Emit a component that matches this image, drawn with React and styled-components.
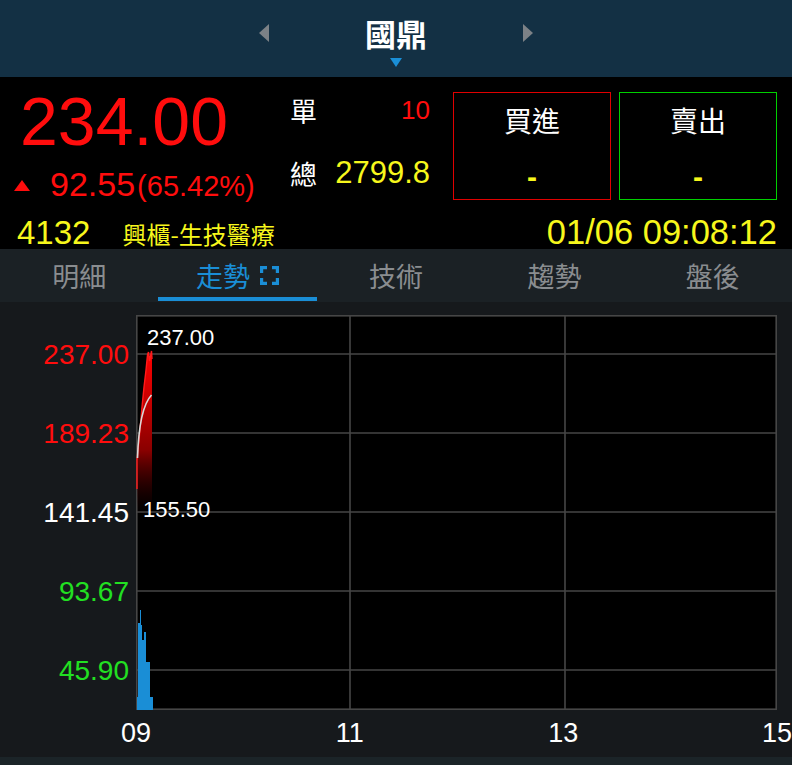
import { styled, createGlobalStyle } from "styled-components";

const GlobalStyle = createGlobalStyle`
    html, body {
        margin: 0;
        padding: 0;
        background: #000;
        overflow: hidden;
    }
    #root {
        width: 792px;
    }
`

const sans = `"Liberation Sans", Arial, "Noto Sans CJK TC", sans-serif`
const cjk = `"Noto Sans CJK TC", "Liberation Sans", sans-serif`
const red = "#ff0d0d"
const yellow = "#f7f71c"
const green = "#22e022"
const blue = "#1a8ed6"

const Header = styled.header`
    height: 77px;
    background: #133044;
    display: flex;
    flex-direction: column;
    align-items: center;
    padding-top: 14px;
    box-sizing: border-box;
`
const TitleRow = styled.div`
    display: flex;
    align-items: center;
    gap: 96px;
    height: 38px;
`
const Arrow = styled.span`
    width: 0;
    height: 0;
    border-top: 9px solid transparent;
    border-bottom: 9px solid transparent;
    ${p => p.$dir === "left" ? "border-right: 10px solid #7c8186;" : "border-left: 10px solid #7c8186;"}
`
const Title = styled.h1`
    margin: 0;
    font-family: ${cjk};
    font-weight: bold;
    font-size: 31px;
    line-height: 38px;
    color: #fff;
`
const Caret = styled.span`
    margin-top: 6px;
    width: 0;
    height: 0;
    border-left: 6px solid transparent;
    border-right: 6px solid transparent;
    border-top: 9px solid ${blue};
`

const Info = styled.section`
    height: 172px;
    background: #000;
    display: flex;
    flex-direction: column;
`
const TopArea = styled.div`
    display: flex;
    height: 123px;
`
const PriceBlock = styled.div`
    width: 270px;
    padding: 10px 0 0 20px;
    box-sizing: border-box;
`
const BigPrice = styled.div`
    font-family: ${sans};
    font-size: 68px;
    line-height: 68px;
    color: ${red};
`
const ChangeRow = styled.div`
    display: flex;
    align-items: baseline;
    margin-top: 13px;
    font-family: ${sans};
    color: ${red};
    white-space: nowrap;
`
const UpMark = styled.span`
    width: 0;
    height: 0;
    border-left: 8px solid transparent;
    border-right: 8px solid transparent;
    border-bottom: 11px solid ${red};
    margin: 0 20px 0 -6px;
    align-self: center;
`
const Change = styled.span`
    font-size: 34px;
    line-height: 32px;
`
const Percent = styled.span`
    font-size: 29px;
    margin-left: 2px;
`

const Stats = styled.div`
    width: 140px;
    margin-left: 20px;
    padding-top: 11px;
    display: flex;
    flex-direction: column;
    gap: 19px;
`
const StatRow = styled.div`
    height: 44px;
    display: flex;
    align-items: center;
    justify-content: space-between;
`
const StatLabel = styled.span`
    font-family: ${cjk};
    font-size: 27px;
    color: #fff;
`
const StatValue = styled.span`
    font-family: ${sans};
    font-size: ${p => p.$size}px;
    color: ${p => p.$color};
`

const TradeBoxes = styled.div`
    display: flex;
    gap: 8px;
    margin-left: 23px;
    padding-top: 15px;
`
const TradeBox = styled.div`
    width: 158px;
    height: 108px;
    box-sizing: border-box;
    border: 1.5px solid ${p => p.$color};
    display: flex;
    flex-direction: column;
    align-items: center;
    padding-top: 11px;
`
const TradeTitle = styled.span`
    font-family: ${cjk};
    font-size: 28px;
    line-height: 32px;
    color: #fff;
`
const TradeDash = styled.span`
    margin-top: 26px;
    font-family: ${sans};
    font-weight: bold;
    font-size: 30px;
    line-height: 30px;
    color: ${yellow};
`

const BottomRow = styled.div`
    height: 49px;
    display: flex;
    align-items: baseline;
    padding: 13px 15px 0 17px;
    box-sizing: border-box;
    color: ${yellow};
    white-space: nowrap;
`
const Code = styled.span`
    font-family: ${sans};
    font-size: 33px;
    line-height: 32px;
`
const Industry = styled.span`
    font-family: ${cjk};
    font-size: 24px;
    margin-left: 32px;
`
const Time = styled.span`
    margin-left: auto;
    font-family: ${sans};
    font-size: 34.5px;
`

const TabBar = styled.nav`
    height: 53px;
    background: #1b2125;
    display: flex;
    padding-bottom: 1px;
    box-sizing: border-box;
`
const Tab = styled.div`
    flex: 1;
    display: flex;
    align-items: center;
    justify-content: center;
    gap: 10px;
    padding-top: 4px;
    font-family: ${cjk};
    font-size: 27px;
    color: ${p => p.$active ? blue : "#8a8d90"};
    border-bottom: 4px solid ${p => p.$active ? blue : "transparent"};
`

const ChartArea = styled.section`
    height: 455px;
    background: #16191c;
    display: grid;
    grid-template-columns: 136px 641px;
    grid-template-rows: 13px 395px 47px;
`
const YAxis = styled.div`
    grid-column: 1;
    grid-row: 2;
    display: flex;
    flex-direction: column;
`
const YLabel = styled.span`
    height: 79px;
    line-height: 79px;
    text-align: right;
    padding-right: 7px;
    font-family: ${sans};
    font-size: 28px;
    color: ${p => p.$color};
`
const Plot = styled.svg`
    grid-column: 2;
    grid-row: 2;
    display: block;
    background: #000;
`
const XAxis = styled.div`
    grid-column: 2;
    grid-row: 3;
    display: flex;
    justify-content: space-between;
    margin: 0 -20px;
`
const XLabel = styled.span`
    width: 40px;
    text-align: center;
    line-height: 47px;
    font-family: ${sans};
    font-size: 27px;
    color: #fff;
`
const Footer = styled.div`
    height: 8px;
    background: #1b2428;
`

const ExpandIcon = () => (
    <svg width="19" height="19" viewBox="0 0 19 19" fill="none" stroke={blue} strokeWidth="3.2">
        <path d="M1.6 7V1.6H7M12 1.6H17.4V7M17.4 12V17.4H12M7 17.4H1.6V12" />
    </svg>
)

const yLabels = [
    { v: "237.00", c: red },
    { v: "189.23", c: red },
    { v: "141.45", c: "#fff" },
    { v: "93.67", c: green },
    { v: "45.90", c: green },
]

// volume bar tops, one per pixel column starting at x=1
const volumeTops = [382, 308, 308, 295, 310, 325, 325, 317, 317, 347, 347, 347, 347, 382, 382, 382]

const volumePath = () => {
    let d = "M1 395"
    volumeTops.forEach((top, i) => {
        d += ` V${top} H${i + 2}`
    })
    return d + " V395 Z"
}

const Chart = () => (
    <Plot width="641" height="395" viewBox="0 0 641 395">
        <defs>
            <linearGradient id="priceFill" gradientUnits="userSpaceOnUse" x1="0" y1="38" x2="0" y2="200">
                <stop offset="0" stopColor="#ff0000" />
                <stop offset="0.6" stopColor="#8a0000" />
                <stop offset="1" stopColor="#200000" stopOpacity="0" />
            </linearGradient>
        </defs>
        {[39, 118, 197, 276, 355].map(y => (
            <line key={y} x1="0" x2="641" y1={y} y2={y} stroke="#464646" strokeWidth="1.6" />
        ))}
        {[214, 429].map(x => (
            <line key={x} x1={x} x2={x} y1="0" y2="395" stroke="#464646" strokeWidth="1.6" />
        ))}
        <rect x="0.8" y="0.8" width="639.4" height="393.4" fill="none" stroke="#464646" strokeWidth="1.6" />
        <path d={volumePath()} fill={blue} />
        <path d="M1 174 L1 145 L4 115 L6 92 L8 72 L10 55 L11.5 40 L12.5 37 L13.5 46 L14.5 41 L15.5 36 L16 44 L16 210 L1 210 Z" fill="url(#priceFill)" />
        <path d="M1 174 L1 145 L4 115 L6 92 L8 72 L10 55 L11.5 40 L12.5 37 L13.5 46 L14.5 41 L15.5 36 L16 44" fill="none" stroke="#ff1a1a" strokeWidth="1.4" />
        <path d="M1.5 143 C2.5 112 6 90 15.5 80" fill="none" stroke="#d8d8d8" strokeWidth="1.6" />
        <text x="11" y="30" fill="#fff" fontFamily="Liberation Sans, Arial, sans-serif" fontSize="22">237.00</text>
        <text x="7" y="202" fill="#fff" fontFamily="Liberation Sans, Arial, sans-serif" fontSize="22">155.50</text>
    </Plot>
)

const App = () => {
    const tabs = ["明細", "走勢", "技術", "趨勢", "盤後"]
    return (
        <>
            <GlobalStyle />
            <Header>
                <TitleRow>
                    <Arrow $dir="left" />
                    <Title>國鼎</Title>
                    <Arrow $dir="right" />
                </TitleRow>
                <Caret />
            </Header>
            <Info>
                <TopArea>
                    <PriceBlock>
                        <BigPrice>234.00</BigPrice>
                        <ChangeRow>
                            <UpMark />
                            <Change>92.55</Change>
                            <Percent>(65.42%)</Percent>
                        </ChangeRow>
                    </PriceBlock>
                    <Stats>
                        <StatRow>
                            <StatLabel>單</StatLabel>
                            <StatValue $size={26} $color={red}>10</StatValue>
                        </StatRow>
                        <StatRow>
                            <StatLabel>總</StatLabel>
                            <StatValue $size={31} $color={yellow}>2799.8</StatValue>
                        </StatRow>
                    </Stats>
                    <TradeBoxes>
                        <TradeBox $color="#e00000">
                            <TradeTitle>買進</TradeTitle>
                            <TradeDash>-</TradeDash>
                        </TradeBox>
                        <TradeBox $color="#00d000">
                            <TradeTitle>賣出</TradeTitle>
                            <TradeDash>-</TradeDash>
                        </TradeBox>
                    </TradeBoxes>
                </TopArea>
                <BottomRow>
                    <Code>4132</Code>
                    <Industry>興櫃-生技醫療</Industry>
                    <Time>01/06 09:08:12</Time>
                </BottomRow>
            </Info>
            <TabBar>
                {tabs.map((t, i) => (
                    <Tab key={t} $active={i === 1}>
                        {t}
                        {i === 1 && <ExpandIcon />}
                    </Tab>
                ))}
            </TabBar>
            <ChartArea>
                <YAxis>
                    {yLabels.map(l => (
                        <YLabel key={l.v} $color={l.c}>{l.v}</YLabel>
                    ))}
                </YAxis>
                <Chart />
                <XAxis>
                    <XLabel>09</XLabel>
                    <XLabel>11</XLabel>
                    <XLabel>13</XLabel>
                    <XLabel>15</XLabel>
                </XAxis>
            </ChartArea>
            <Footer />
        </>
    )
}

export default App
